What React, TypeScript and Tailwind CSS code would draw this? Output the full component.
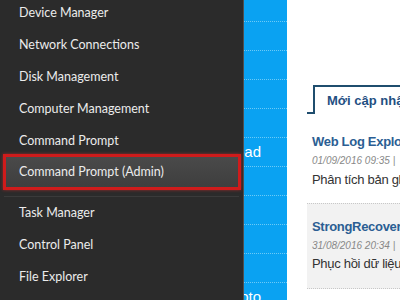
const menuTop = ["Device Manager", "Network Connections", "Disk Management", "Computer Management", "Command Prompt"];
const menuBottom = ["Task Manager", "Control Panel", "File Explorer"];

const stripRows = ["", "", "", "", "Download", "", "", "", "", "Photo"];

function MenuItem({ label }: { label: string }) {
  return <div className="flex h-8 items-center whitespace-nowrap pl-[19px]">{label}</div>;
}

export default function App() {
  return (
    <div className="flex h-[300px] w-[400px] overflow-hidden bg-white">
      <div className="relative z-10 w-[243px] shrink-0 bg-[#2b2b2b] font-['Lato',sans-serif] text-[12.5px] text-[#ececec]">
        <div className="-mt-[3px]">
          {menuTop.map((m) => (
            <MenuItem key={m} label={m} />
          ))}
          <div className="-mt-[3px] ml-[3px] mr-[2px] flex h-[36px] items-center whitespace-nowrap border-[3px] border-[#cf1b1b] bg-gradient-to-b from-[#4a4a4a] to-[#3e3e3e] pl-[13px] shadow-[0_0_3px_rgba(230,40,40,0.6)]">
            Command Prompt (Admin)
          </div>
          <div className="mx-[4px] mt-[3px] h-[4px] border-b border-[#3a3a3a]" />
          {menuBottom.map((m) => (
            <MenuItem key={m} label={m} />
          ))}
        </div>
      </div>
      <div className="w-px shrink-0 bg-[#4f4f4f]" />
      <div className="flex w-[43px] shrink-0 flex-col overflow-hidden bg-[#0aa2f2] font-['Liberation_Sans',sans-serif] text-[15px] text-white">
        <div className="h-[22px] shrink-0 border-b border-dotted border-[#6ccaf7]" />
        {stripRows.map((t, i) => (
          <div
            key={i}
            className="flex h-[29px] shrink-0 items-center justify-end whitespace-nowrap border-b border-dotted border-[#6ccaf7] pr-[26px]"
          >
            {t}
          </div>
        ))}
      </div>
      <div className="min-w-0 flex-1 overflow-hidden pl-[20px] pt-[85px] font-['Liberation_Sans',sans-serif]">
        <div className="flex items-end">
          <div className="w-[6px] shrink-0 border-b-2 border-[#1f4d6e]" />
          <div className="flex h-[29px] flex-1 items-center whitespace-nowrap border-l-2 border-t-2 border-[#1f4d6e] pl-[12px] text-[13px] font-bold text-[#1f4f82]">
            Mới cập nhật
          </div>
        </div>
        <div className="whitespace-nowrap pl-[5px] pt-[20px]">
          <div className="text-[13px] font-bold leading-[16px] tracking-[-0.3px] text-[#2b5e93]">Web Log Explorer</div>
          <div className="mt-[4px] text-[10px] italic leading-[14px] text-[#888]">01/09/2016 09:35 |</div>
          <div className="mt-[4px] text-[13px] leading-[16px] tracking-[-0.3px] text-[#333]">Phân tích bản ghi</div>
        </div>
        <div className="mt-[15px] h-[86px] whitespace-nowrap border-y border-dotted border-[#c8c8c8] bg-[#f2f2f2] pl-[5px] pt-[15px]">
          <div className="text-[13px] font-bold leading-[16px] tracking-[-0.3px] text-[#2b5e93]">StrongRecovery</div>
          <div className="mt-[4px] text-[10px] italic leading-[14px] text-[#888]">31/08/2016 20:34 |</div>
          <div className="mt-[3px] text-[13px] leading-[16px] tracking-[-0.3px] text-[#333]">Phục hồi dữ liệu</div>
        </div>
      </div>
    </div>
  );
}
